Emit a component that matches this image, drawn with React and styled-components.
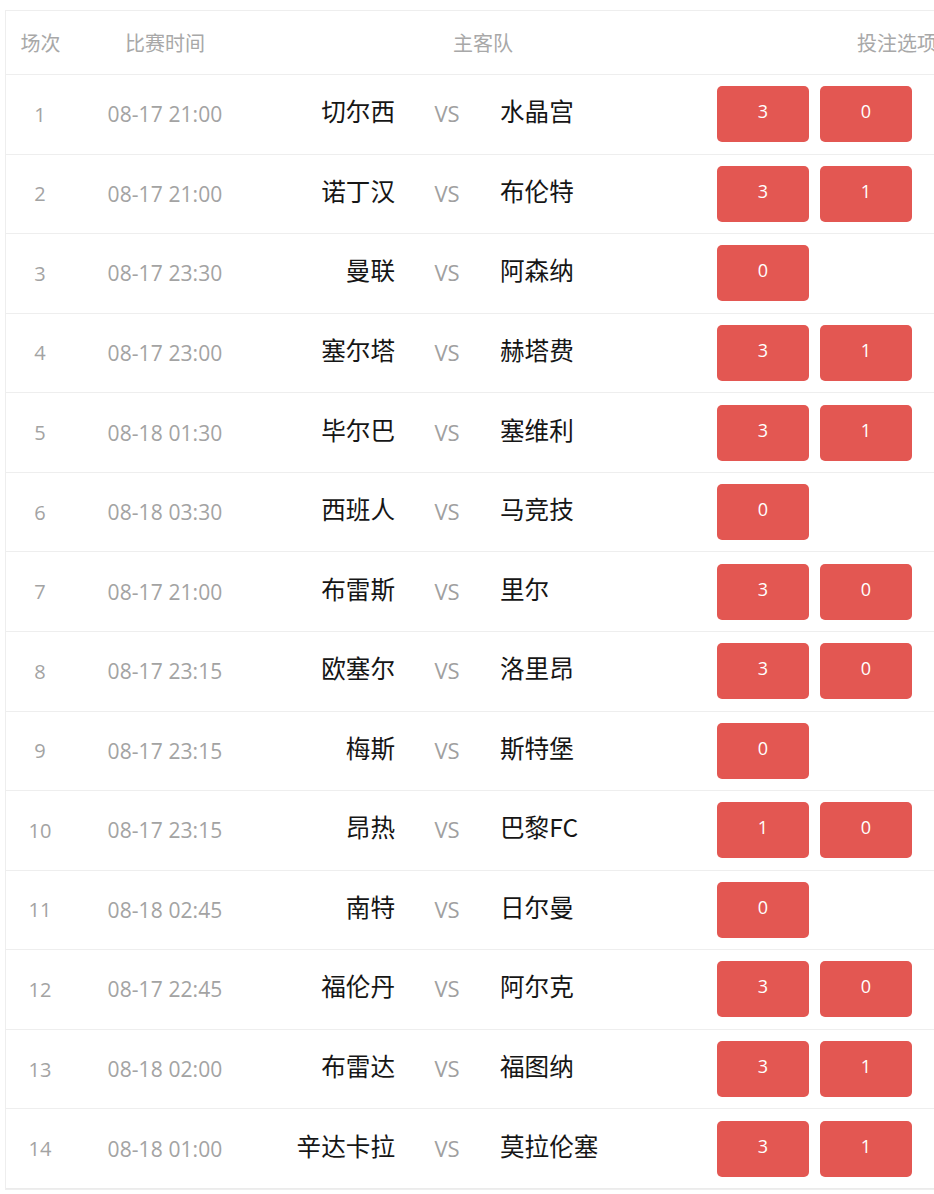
import React from "react";
import styled, { createGlobalStyle } from "styled-components";

const Global = createGlobalStyle`
  html, body { margin: 0; padding: 0; background: #fff; overflow: hidden; }
  body { font-family: "Open Sans", "Noto Sans CJK SC", sans-serif; }
`;

const Page = styled.div`
  padding: 10px 0 0 5px;
  width: 1100px;
`;

const Table = styled.div`
  width: 1080px;
  border: 1px solid #eeeeee;
  border-right: none;
`;

const cols = "69px 180px 140px 38px 28px 40px 210px 1fr";

const HeaderRow = styled.div`
  display: grid;
  grid-template-columns: 69px 180px 456px 1fr;
  height: 63px;
  align-items: center;
  border-bottom: 1px solid #eeeeee;
  color: #a8a8a8;
  font-family: "Noto Sans CJK SC", sans-serif;
  font-size: 20px;
`;

const HeadCell = styled.div`
  text-align: ${(p) => p.$align || "center"};
  padding-left: ${(p) => p.$pl || 0}px;
  white-space: nowrap;
`;

const Row = styled.div`
  display: grid;
  grid-template-columns: ${cols};
  height: 78.57px;
  align-items: center;
  border-bottom: 1px solid #eeeeee;
  &:last-child { border-bottom: 1px solid #ebebeb; }
`;

const Num = styled.div`
  text-align: center;
  color: #a3a3a3;
  font-size: 20px;
  padding-right: 1px;
`;

const Time = styled.div`
  text-align: center;
  color: #a3a3a3;
  font-size: 21px;
  letter-spacing: 0.1px;
`;

const Team = styled.div`
  grid-column: ${(p) => (p.$home ? 3 : 7)};
  font-family: "Noto Sans CJK SC", sans-serif;
  font-size: 24.6px;
  color: #161616;
  text-align: ${(p) => (p.$home ? "right" : "left")};
  white-space: nowrap;
  margin-top: -8px;
  margin-left: ${(p) => (p.$home ? "-10px" : "-1px")};
`;

const Vs = styled.div`
  grid-column: 5;
  color: #a0a0a0;
  font-size: 22px;
  text-align: center;
  margin-top: -2px;
`;

const Bets = styled.div`
  grid-column: 8;
  display: flex;
  gap: 11px;
  padding-left: 6px;
  margin-top: 0;
`;

const BetBtn = styled.div`
  width: 92px;
  height: 56px;
  border-radius: 5px;
  background: #e35752;
  color: #fff;
  font-size: 18px;
  display: flex;
  align-items: center;
  justify-content: center;
  padding-bottom: 6px;
  box-sizing: border-box;
`;

const data = [
  ["1", "08-17 21:00", "切尔西", "水晶宫", ["3", "0"]],
  ["2", "08-17 21:00", "诺丁汉", "布伦特", ["3", "1"]],
  ["3", "08-17 23:30", "曼联", "阿森纳", ["0"]],
  ["4", "08-17 23:00", "塞尔塔", "赫塔费", ["3", "1"]],
  ["5", "08-18 01:30", "毕尔巴", "塞维利", ["3", "1"]],
  ["6", "08-18 03:30", "西班人", "马竞技", ["0"]],
  ["7", "08-17 21:00", "布雷斯", "里尔", ["3", "0"]],
  ["8", "08-17 23:15", "欧塞尔", "洛里昂", ["3", "0"]],
  ["9", "08-17 23:15", "梅斯", "斯特堡", ["0"]],
  ["10", "08-17 23:15", "昂热", "巴黎FC", ["1", "0"]],
  ["11", "08-18 02:45", "南特", "日尔曼", ["0"]],
  ["12", "08-17 22:45", "福伦丹", "阿尔克", ["3", "0"]],
  ["13", "08-18 02:00", "布雷达", "福图纳", ["3", "1"]],
  ["14", "08-18 01:00", "辛达卡拉", "莫拉伦塞", ["3", "1"]],
];

export default function App() {
  return (
    <>
      <Global />
      <Page>
        <Table>
          <HeaderRow>
            <HeadCell>场次</HeadCell>
            <HeadCell>比赛时间</HeadCell>
            <HeadCell>主客队</HeadCell>
            <HeadCell $align="left" $pl={146}>投注选项</HeadCell>
          </HeaderRow>
          {data.map(([n, t, h, a, bets]) => (
            <Row key={n}>
              <Num>{n}</Num>
              <Time>{t}</Time>
              <Team $home>{h}</Team>
              <Vs>VS</Vs>
              <Team>{a}</Team>
              <Bets>
                {bets.map((b, i) => (
                  <BetBtn key={i}>{b}</BetBtn>
                ))}
              </Bets>
            </Row>
          ))}
        </Table>
      </Page>
    </>
  );
}
